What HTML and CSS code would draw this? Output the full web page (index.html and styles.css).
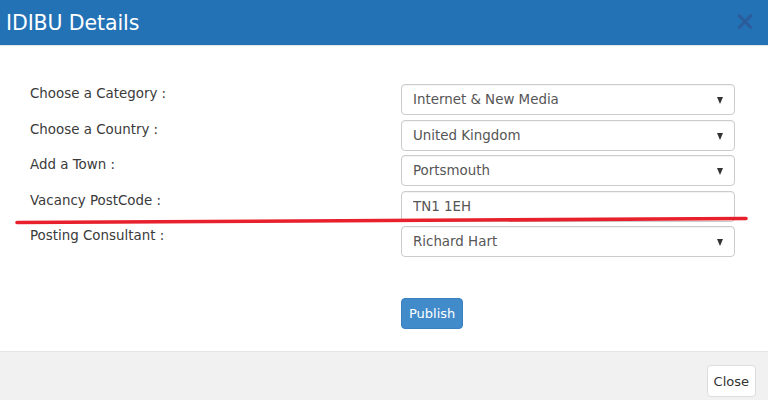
FILE: index.html
```html
<!DOCTYPE html>
<html lang="en">
<head>
    <meta charset="UTF-8">
    <title>IDIBU Details</title>
    <link rel="stylesheet" href="styles.css">
</head>
<body>
<div class="modal">
    <div class="modal-header">
        <h4>IDIBU Details</h4>
        <span class="close-x">&times;</span>
    </div>
    <div class="modal-body">
        <form class="details-form" autocomplete="off">
            <div class="row">
                <label for="category">Choose a Category :</label>
                <span class="select-wrap">
                    <select id="category"><option>Internet &amp; New Media</option></select>
                </span>
            </div>
            <div class="row">
                <label for="country">Choose a Country :</label>
                <span class="select-wrap">
                    <select id="country"><option>United Kingdom</option></select>
                </span>
            </div>
            <div class="row">
                <label for="town">Add a Town :</label>
                <span class="select-wrap">
                    <select id="town"><option>Portsmouth</option></select>
                </span>
            </div>
            <div class="row">
                <label for="postcode">Vacancy PostCode :</label>
                <input type="text" id="postcode" value="TN1 1EH">
            </div>
            <div class="row">
                <label for="consultant">Posting Consultant :</label>
                <span class="select-wrap">
                    <select id="consultant"><option>Richard Hart</option></select>
                </span>
            </div>
            <div class="submit-row">
                <button type="button" class="btn-publish">Publish</button>
            </div>
        </form>
    </div>
    <div class="modal-footer">
        <button type="button" class="btn-close">Close</button>
    </div>
    <!-- hand drawn annotation -->
    <svg class="markup" width="768" height="400" viewBox="0 0 768 400">
        <path d="M17 222.5 L300 221 L746 218.5" stroke="#e8202b" stroke-width="3.6" fill="none" stroke-linecap="round"/>
    </svg>
</div>
</body>
</html>
```

FILE: styles.css
```css
body {
    margin: 0;
    font-family: "DejaVu Sans", Verdana, sans-serif;
}
.modal {
    position: relative;
    width: 768px;
    height: 400px;
    overflow: hidden;
    background: #fff;
}
.modal-header {
    height: 45px;
    background: #2372b6;
    border-bottom: 1px solid #e5e5e5;
    display: flex;
    align-items: center;
    justify-content: space-between;
    padding: 0 12px 0 6px;
}
.modal-header h4 {
    margin: 0;
    color: #fff;
    font-size: 20.5px;
    font-weight: normal;
    letter-spacing: -0.1px;
}
.close-x {
    color: #2b5d9c;
    font-size: 26px;
    font-weight: bold;
    line-height: 1;
    margin-top: -4px;
}
.modal-body {
    height: 305px;
    box-sizing: border-box;
    padding: 38px 33px 0 30px;
}
.row {
    display: flex;
    align-items: flex-start;
    margin-bottom: 4.5px;
}
.row label {
    width: 371px;
    padding-top: 2px;
    font-size: 13.4px;
    color: #3a3a3a;
}
.select-wrap {
    position: relative;
    display: block;
    width: 334px;
}
.select-wrap::after {
    content: "";
    position: absolute;
    right: 12px;
    top: 13px;
    border-left: 3.5px solid transparent;
    border-right: 3.5px solid transparent;
    border-top: 7px solid #333;
}
.row select,
.row input[type="text"] {
    display: block;
    width: 334px;
    height: 31px;
    box-sizing: border-box;
    padding: 0 11px;
    border: 1px solid #ccc;
    border-radius: 4px;
    background: #fff;
    font-family: "DejaVu Sans", Verdana, sans-serif;
    font-size: 13.4px;
    color: #555;
    appearance: none;
    -webkit-appearance: none;
    box-shadow: inset 0 1px 1px rgba(0, 0, 0, 0.05);
}
.submit-row {
    margin-left: 371px;
    padding-top: 36px;
}
.btn-publish {
    height: 31px;
    padding: 0 7px;
    background: #428bca;
    border: 1px solid #3b7fc0;
    border-radius: 4px;
    color: #fff;
    font-family: "DejaVu Sans", Verdana, sans-serif;
    font-size: 13px;
}
.modal-footer {
    height: 49px;
    background: #f1f1f1;
    border-top: 1px solid #e5e5e5;
    display: flex;
    justify-content: flex-end;
    align-items: flex-start;
    padding: 13px 12px 0 0;
    box-sizing: border-box;
}
.btn-close {
    height: 32px;
    padding: 0 6px;
    background: #fff;
    border: 1px solid #ddd;
    border-radius: 4px;
    color: #333;
    font-family: "DejaVu Sans", Verdana, sans-serif;
    font-size: 13px;
}
.markup {
    position: absolute;
    left: 0;
    top: 0;
    pointer-events: none;
}
```
